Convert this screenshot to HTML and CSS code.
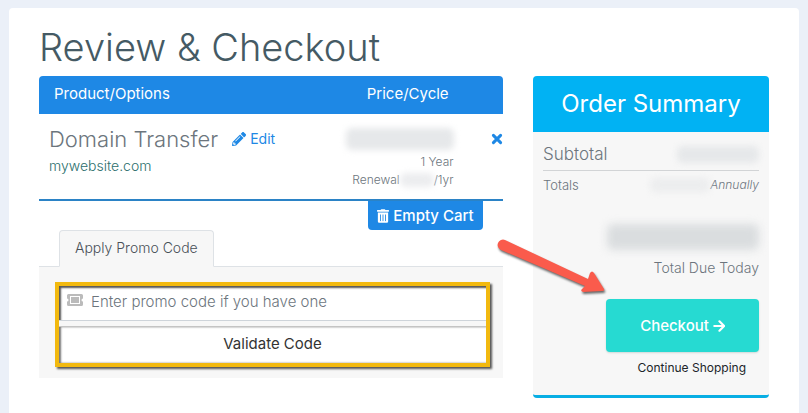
FILE: index.html
```html
<!DOCTYPE html>
<html lang="en">
<head>
<meta charset="utf-8">
<meta name="viewport" content="width=device-width, initial-scale=1">
<title>Review &amp; Checkout</title>
<link rel="stylesheet" href="styles.css">
</head>
<body>
<main class="page">
  <h1 class="title">Review &amp; Checkout</h1>
  <div class="columns">
    <section class="cart">
      <table class="items">
        <colgroup><col class="col-product"><col class="col-price"><col class="col-remove"></colgroup>
        <thead>
          <tr><th class="head-product">Product/Options</th><th class="head-price">Price/Cycle</th><th></th></tr>
        </thead>
        <tbody>
          <tr>
            <td class="product">
              <div class="product-line">
                <span class="product-name">Domain Transfer</span>
                <a class="edit" href="#"><svg class="icon-edit" viewBox="0 0 512 512" aria-hidden="true"><path fill="currentColor" d="M498 142l-46 46c-5 5-13 5-17 0L324 77c-5-5-5-12 0-17l46-46c19-19 49-19 68 0l60 60c19 19 19 49 0 68zm-214-42L22 362 0 484c-3 16 12 30 28 28l122-22 262-262c5-5 5-13 0-17L301 100c-4-5-12-5-17 0zM124 340c-5-6-5-14 0-20l154-154c6-5 14-5 20 0s5 14 0 20L144 340c-6 5-14 5-20 0zm-36 84h48v36l-64 12-32-31 12-65h36v48z"/></svg>Edit</a>
              </div>
              <div class="domain">mywebsite.com</div>
            </td>
            <td class="price">
              <div class="redacted redacted-price"></div>
              <div>1 Year</div>
              <div class="renewal">Renewal<span class="redacted redacted-renewal"></span>/1yr</div>
            </td>
            <td class="remove-cell">
              <button class="remove" type="button" aria-label="Remove"><svg viewBox="0 0 20 20" aria-hidden="true"><path d="M4 4l12 12M16 4L4 16" fill="none" stroke="currentColor" stroke-width="5" stroke-linecap="round"/></svg></button>
            </td>
          </tr>
        </tbody>
      </table>
      <div class="cart-actions">
        <button class="empty" type="button"><svg class="icon-trash" viewBox="0 0 448 512" aria-hidden="true"><path fill="currentColor" fill-rule="evenodd" d="M32 464a48 48 0 0 0 48 48h288a48 48 0 0 0 48-48V128H32zm272-256a16 16 0 0 1 32 0v224a16 16 0 0 1-32 0zm-96 0a16 16 0 0 1 32 0v224a16 16 0 0 1-32 0zm-96 0a16 16 0 0 1 32 0v224a16 16 0 0 1-32 0zM432 32H312l-9-19a24 24 0 0 0-22-13H167a24 24 0 0 0-22 13l-9 19H16A16 16 0 0 0 0 48v32a16 16 0 0 0 16 16h416a16 16 0 0 0 16-16V48a16 16 0 0 0-16-16z"/></svg>Empty Cart</button>
      </div>
      <div class="tabs"><a class="tab" href="#promo">Apply Promo Code</a></div>
      <form class="promo" id="promo">
        <div class="highlight">
          <label class="field">
            <svg class="icon-ticket" viewBox="0 0 32 24" aria-hidden="true"><path fill="currentColor" fill-rule="evenodd" d="M3 0h26a3 3 0 0 1 3 3v6a3 3 0 0 0 0 6v6a3 3 0 0 1-3 3H3a3 3 0 0 1-3-3v-6a3 3 0 0 0 0-6V3a3 3 0 0 1 3-3zM6 4v16h20V4zM8 6h16v12H8z"/></svg>
            <input class="code" type="text" placeholder="Enter promo code if you have one" aria-label="Promo code">
          </label>
          <button class="validate" type="button">Validate Code</button>
        </div>
      </form>
    </section>
    <aside class="summary">
      <h2 class="summary-title">Order Summary</h2>
      <div class="summary-body">
        <div class="line subtotal"><span>Subtotal</span><span class="redacted redacted-subtotal"></span></div>
        <div class="line totals"><span>Totals</span><span class="cycle"><span class="redacted redacted-totals"></span><em>Annually</em></span></div>
        <div class="due"><div class="redacted redacted-due"></div><div>Total Due Today</div></div>
        <div class="actions">
          <button class="checkout" type="button">Checkout<svg class="icon-arrow" viewBox="0 0 28 28" aria-hidden="true"><path d="M3 14h22M15 3l11 11-11 11" fill="none" stroke="currentColor" stroke-width="5" stroke-linecap="round" stroke-linejoin="round"/></svg></button>
          <a class="continue" href="#">Continue Shopping</a>
        </div>
      </div>
      <svg class="pointer" viewBox="0 0 112 72" aria-hidden="true"><path fill="#fa5b4c" d="M9 4L92 43L94 37Q96 34 98 37L108 53Q109 55 106 55L87 56Q84 55 86 53L89 50L5 14A5 5 0 0 1 9 4Z"/></svg>
    </aside>
  </div>
</main>
</body>
</html>
```
FILE: styles.css
```css
* {
  box-sizing: border-box;
}

body {
  margin: 0;
  padding: 8px 9px 0;
  background: #ebf0f8;
  color: #6c757d;
  font: 300 14px/20px Inter, sans-serif;
}

button,
input {
  font: inherit;
}

button {
  cursor: pointer;
}

a {
  text-decoration: none;
}

.page {
  min-height: calc(100vh - 8px);
  padding: 14px 30px 15px;
  background: #fff;
  border-radius: 4px 4px 0 0;
}

.title {
  margin: 0 0 4px;
  color: #455a64;
  font-size: 38px;
  font-weight: 300;
  line-height: 50px;
}

.columns {
  display: grid;
  grid-template-columns: 464fr 236fr;
  gap: 30px;
  align-items: start;
}

.items {
  width: 100%;
  table-layout: fixed;
  border-collapse: separate;
  border-spacing: 0;
  border-bottom: 2px solid #2b83c6;
}

.col-product {
  width: 64%;
}

.col-remove {
  width: 10%;
}

th {
  height: 38px;
  padding: 0 0 2px;
  background: #1e88e5;
  color: #fff;
  font-size: 15px;
  font-weight: 400;
  text-align: left;
}

th:first-child {
  padding-left: 15px;
  border-top-left-radius: 4px;
}

th.head-price {
  padding-right: 8px;
  text-align: right;
}

th:last-child {
  border-top-right-radius: 4px;
}

td {
  height: 85px;
  padding: 10px 0 0;
  vertical-align: top;
}

td.product {
  padding-left: 10px;
}

.product-line {
  display: flex;
  align-items: center;
  gap: 14px;
  height: 30px;
}

.product-name {
  font-size: 22px;
}

.edit {
  display: flex;
  align-items: center;
  gap: 4px;
  color: #1e88e5;
  font-size: 14px;
  font-weight: 400;
}

.icon-edit {
  width: 14px;
  height: 14px;
}

.domain {
  margin-top: 2px;
  color: #2c6f6d;
}

td.price {
  padding-right: 3px;
  font-size: 12px;
  line-height: 18px;
  text-align: right;
}

.redacted {
  display: block;
  background: #e6e8ea;
  border-radius: 6px;
  filter: blur(3px);
}

.redacted-price {
  width: 108px;
  height: 22px;
  margin: 4px 0 3px auto;
}

.renewal {
  display: flex;
  align-items: center;
  justify-content: flex-end;
  white-space: nowrap;
}

.redacted-renewal {
  width: 34px;
  height: 14px;
  background: #ecedef;
}

td.remove-cell {
  text-align: right;
}

.remove {
  width: 12px;
  height: 30px;
  padding: 0;
  border: 0;
  background: none;
  color: #1e88e5;
}

.remove svg {
  display: block;
  width: 12px;
  height: 12px;
}

.cart-actions {
  display: flex;
  justify-content: flex-end;
  padding-right: 20px;
}

.empty {
  display: flex;
  align-items: center;
  justify-content: center;
  gap: 4px;
  width: 115px;
  height: 29px;
  padding: 0;
  border: 0;
  border-radius: 0 0 4px 4px;
  background: #1e88e5;
  color: #fff;
  font-size: 15px;
  font-weight: 500;
}

.icon-trash {
  width: 12px;
  height: 14px;
}

.tabs {
  display: flex;
  padding-left: 20px;
  border-bottom: 1px solid #dee2e6;
}

.tab {
  margin-bottom: -1px;
  padding: 7px 15px 8px;
  border: 1px solid #dee2e6;
  border-bottom-color: #f7f7f7;
  border-radius: 4px 4px 0 0;
  background: #f7f7f7;
  color: #495057;
  font-size: 14px;
}

.promo {
  padding: 15px 13px 11px 16px;
  background: #f7f7f7;
}

.highlight {
  display: flex;
  flex-direction: column;
  gap: 5px;
  border: 4px solid #f2b90f;
  box-shadow: 2px 2px 2px #555;
}

.field {
  display: flex;
  align-items: center;
  gap: 8px;
  height: 35px;
  padding: 0 0 3px 8px;
  border-bottom: 1px solid #ced4da;
  background: #fff;
  box-shadow: inset 2px 2px 2px #555;
}

.icon-ticket {
  width: 16px;
  height: 12px;
  margin-bottom: 4px;
  color: #bbb;
}

.code {
  flex: 1;
  min-width: 0;
  padding: 0;
  border: 0;
  outline: 0;
  background: none;
  color: #6c757d;
  font-size: 15px;
  font-weight: 300;
}

.code::placeholder {
  color: #6c757d;
  opacity: 1;
}

.validate {
  height: 37px;
  padding: 0 0 2px;
  border: 0;
  border-top: 1px solid #c4c4c4;
  background: #fff;
  box-shadow: inset 2px 0 2px #777;
  color: #333;
  font-size: 15px;
  font-weight: 400;
}

.summary {
  position: relative;
  border-bottom: 3px solid #08aee4;
  border-radius: 4px;
  background: #f7f7f7;
}

.summary-title {
  margin: 0;
  padding: 14px 0;
  border-radius: 4px 4px 0 0;
  background: #01b2f3;
  color: #fff;
  font-size: 24px;
  font-weight: 400;
  line-height: 28px;
  text-align: center;
}

.summary-body {
  padding: 6px 10px 17px;
}

.line {
  display: flex;
  align-items: center;
  justify-content: space-between;
}

.subtotal {
  height: 33px;
  border-bottom: 1px solid #d2d4d6;
  font-size: 17px;
}

.redacted-subtotal {
  width: 82px;
  height: 17px;
}

.totals {
  height: 28px;
  font-size: 13px;
}

.cycle {
  display: flex;
  align-items: center;
  font-size: 12px;
}

.redacted-totals {
  width: 60px;
  height: 14px;
  background: #ecedee;
}

.due {
  padding-top: 25px;
  font-size: 14px;
  text-align: right;
}

.redacted-due {
  width: 152px;
  height: 26px;
  margin: 0 0 8px auto;
  background: #dadddf;
  filter: blur(4px);
}

.actions {
  display: flex;
  flex-direction: column;
  align-items: flex-end;
  margin-top: 21px;
}

.checkout {
  display: flex;
  align-items: center;
  justify-content: center;
  gap: 4px;
  width: 153px;
  height: 53px;
  padding: 0;
  border: 0;
  border-radius: 4px;
  background: #26dad2;
  box-shadow: 0 1px 2px #cfd8d8;
  color: #fff;
  font-size: 15px;
  font-weight: 500;
}

.icon-arrow {
  width: 12px;
  height: 12px;
}

.continue {
  margin: 6px 13px 0 0;
  color: #212529;
  font-size: 12px;
  font-weight: 400;
}

.pointer {
  position: absolute;
  top: 160px;
  left: -37px;
  width: 112px;
  height: 72px;
  filter: drop-shadow(1px 2px 1px #666);
}
```
